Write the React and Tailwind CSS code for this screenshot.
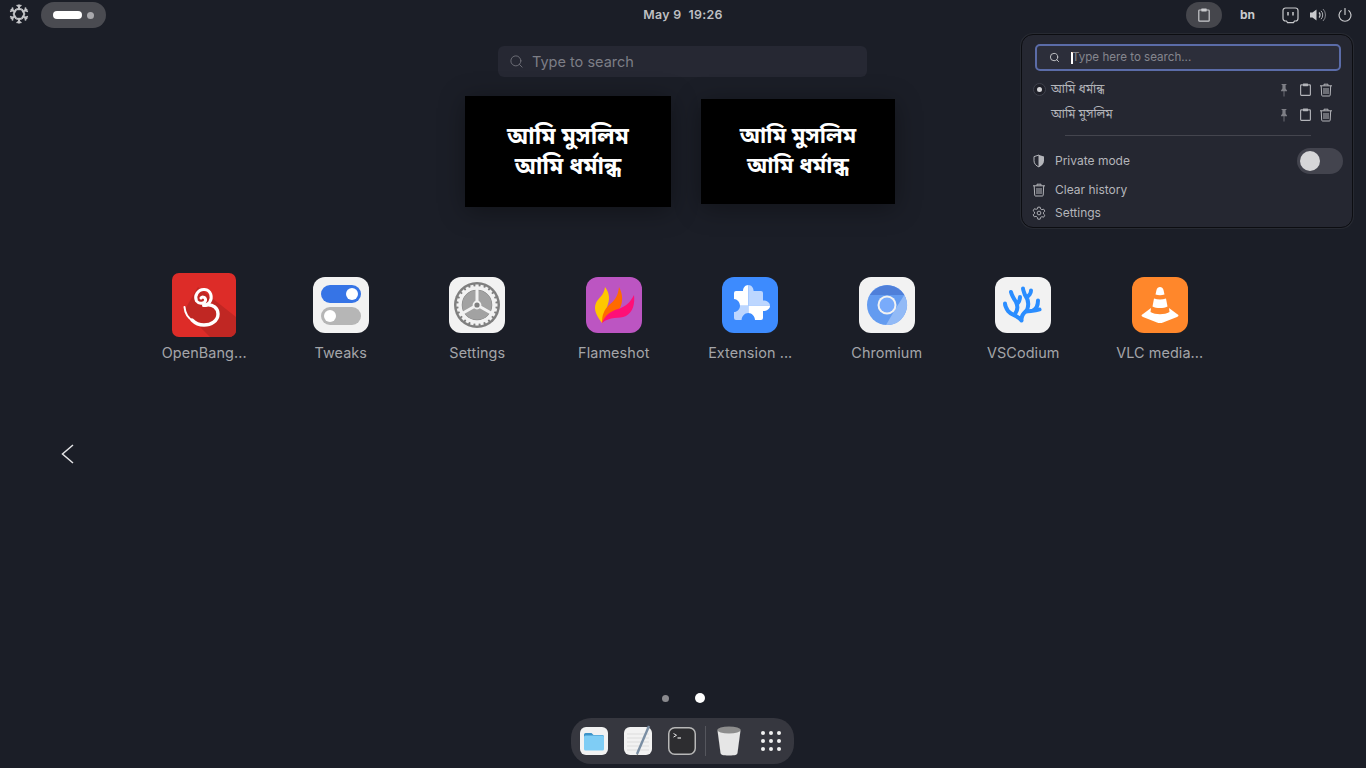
import { Search } from "lucide-react";

const BN = '"Noto Sans Bengali", "Lohit Bengali", "Noto Sans", "DejaVu Sans", sans-serif';

function NixGear() {
  const spokes = [0, 60, 120, 180, 240, 300];
  return (
    <svg width="22" height="22" viewBox="0 0 22 22" fill="none" stroke="#c4c5c8" strokeWidth="2" strokeLinecap="butt">
      {spokes.map((a) => (
        <g key={a} transform={`rotate(${a} 11 11)`}>
          <path d="M8.300 6.200 L13.700 6.200" />
          <path d="M11 6 L11 1.500" />
          <path d="M11 4 L8.600 2 M11 4 L13.400 2" strokeWidth="1.500" />
        </g>
      ))}
    </svg>
  );
}

function ClipIcon({ size = 16, color = "#c9cacd" }) {
  return (
    <svg width={size} height={size} viewBox="0 0 16 16" fill="none" stroke={color} strokeWidth="1.2">
      <path d="M5.2 3H3.6a.8.8 0 0 0-.8.8v9.6a.8.8 0 0 0 .8.8h8.8a.8.8 0 0 0 .8-.8V3.800a.8.8 0 0 0-.8-.8h-1.600" />
      <rect x="5.2" y="1.6" width="5.6" height="2.8" rx="0.6" fill={color} stroke="none" />
    </svg>
  );
}

function PinIcon() {
  return (
    <svg width="12" height="14" viewBox="0 0 12 14" fill="#7d7e85">
      <path d="M3.600 1h4.800v1H7.600v3.400l1.400 2v.8H3v-.8l1.400-2V2H3.600z" />
      <rect x="5.600" y="8" width="0.800" height="5.500" />
    </svg>
  );
}

function TrashIcon({ color = "#b4b5ba" }) {
  return (
    <svg width="14" height="14" viewBox="0 0 14 14" fill="none" stroke={color} strokeWidth="1">
      <path d="M1 2.800h12M5 2.600V1.200h4v1.400" />
      <path d="M2.200 2.800l.5 9.400c0 .5.4.8.8.8h6.900c.5 0 .8-.3.8-.8l.5-9.400" />
      <path d="M5 5v6M7 5v6M9 5v6" />
    </svg>
  );
}

function ShieldIcon() {
  return (
    <svg width="14" height="14" viewBox="0 0 14 14">
      <path d="M7 1L2 2.600v4.200c0 2.900 2.200 5 5 6.200z" fill="none" stroke="#b4b5ba" strokeWidth="1" />
      <path d="M7 1l5 1.600v4.200c0 2.900-2.200 5-5 6.200z" fill="#b4b5ba" />
    </svg>
  );
}

function GearSmall() {
  return (
    <svg width="14" height="14" viewBox="0 0 24 24" fill="none" stroke="#b4b5ba" strokeWidth="1.600" strokeLinejoin="round">
      <path d="M10 2h4l.7 3 2.300 1.300 3-.9 2 3.400-2.300 2.200v2.600l2.300 2.200-2 3.400-3-.9-2.300 1.300-.7 3h-4l-.7-3L7 17.600l-3 .9-2-3.400 2.300-2.200v-2.600L2 8.100l2-3.400 3 .9L9.300 5z" />
      <circle cx="12" cy="12" r="3.200" />
    </svg>
  );
}

function OutletIcon() {
  return (
    <svg width="17" height="17" viewBox="0 0 17 17" fill="none" stroke="#c9cacd" strokeWidth="1.200">
      <path d="M3.500 1h10A2.500 2.500 0 0 1 16 3.500v8a2.500 2.500 0 0 1-2.500 2.500H12.500l-1 1.600h-6l-1-1.600h-1A2.500 2.500 0 0 1 1 11.500v-8A2.500 2.500 0 0 1 3.500 1z" />
      <path d="M6 5v3.500M11 5v3.500" strokeWidth="1.500" />
    </svg>
  );
}

function VolumeIcon() {
  return (
    <svg width="18" height="16" viewBox="0 0 18 16" fill="none" stroke="#c9cacd">
      <path d="M1 5.500h2.500L7.500 2.500v11L3.500 10.500H1z" fill="#c9cacd" stroke="none" />
      <path d="M10 5.500a3.500 3.500 0 0 1 0 5" strokeWidth="1.200" />
      <path d="M12 3.800a6 6 0 0 1 0 8.400" strokeWidth="1" opacity="0.85" />
      <path d="M14 2a8.500 8.500 0 0 1 0 12" strokeWidth="1" opacity="0.6" />
    </svg>
  );
}

function PowerIcon() {
  return (
    <svg width="16" height="16" viewBox="0 0 16 16" fill="none" stroke="#c9cacd" strokeWidth="1.200" strokeLinecap="round">
      <path d="M8 1.500v6" />
      <path d="M4.200 3.600a6 6 0 1 0 7.600 0" />
    </svg>
  );
}

function OpenBanglaIcon() {
  return (
    <svg width="64" height="64" viewBox="0 0 64 64" fill="none">
      <rect width="64" height="64" rx="7" fill="#dd2c28" />
      <path d="M26 14 L64 44 V57 a7 7 0 0 1-7 7 H38 L12 38z" fill="#c02723" />
      <path d="M29 25c1.500-2 5-.5 4.500 2.500-.5 3-6.500 4-9 .5-2.500-5 1.500-12 8-11.500 6.500.5 8.500 8 5 13-1.500 2-3.500 3-6 3" stroke="#fff" strokeWidth="3" strokeLinecap="round" />
      <path d="M34 32c7-1 12 3 12 9 0 7-7 11-14 11-5 0-9-2-12-5" stroke="#fff" strokeWidth="3.400" strokeLinecap="round" />
      <path d="M21 48c-5-3-8-8-8.500-14" stroke="#fff" strokeWidth="2" strokeLinecap="round" />
    </svg>
  );
}

function TweaksIcon() {
  return (
    <svg width="56" height="56" viewBox="0 0 56 56">
      <rect width="56" height="56" rx="12" fill="#f2f2f2" />
      <rect x="8" y="8" width="40" height="18" rx="9" fill="#3674e6" />
      <circle cx="39" cy="17" r="6" fill="#fff" />
      <rect x="8" y="30" width="40" height="18" rx="9" fill="#b6b6b6" />
      <circle cx="17" cy="39" r="6" fill="#fff" />
    </svg>
  );
}

function SettingsIcon() {
  const teeth = Array.from({ length: 24 }, (_, i) => i * 15);
  return (
    <svg width="56" height="56" viewBox="0 0 56 56">
      <rect width="56" height="56" rx="12" fill="#f2f2f2" />
      <circle cx="28" cy="28" r="23" fill="#7f7f7f" />
      {teeth.map((a) => (
        <rect key={a} x="26.400" y="7.500" width="3.200" height="4.500" fill="#f2f2f2" transform={`rotate(${a} 28 28)`} />
      ))}
      <circle cx="28" cy="28" r="17" fill="none" stroke="#f2f2f2" strokeWidth="3.500" />
      <circle cx="28" cy="28" r="14.800" fill="#a2a2a2" />
      <path d="M28 28V12M28 28L14 36M28 28l14 8" stroke="#f2f2f2" strokeWidth="3" />
      <circle cx="28" cy="28" r="3.500" fill="#7f7f7f" stroke="#f2f2f2" strokeWidth="1.800" />
    </svg>
  );
}

function FlameshotIcon() {
  return (
    <svg width="56" height="56" viewBox="0 0 56 56">
      <rect width="56" height="56" rx="12" fill="#bc55c2" />
      <path d="M16 46c-5-7-9-13-6-20 2-5 8-7 9-16 4 5 5 11 3 17-2 6-4 11-6 19z" fill="#fec700" />
      <path d="M16 46c0-8 2-13 7-18 5-4 9-8 10-18 4 7 4 15 1 21-5 6-12 7-18 15z" fill="#ff6a00" />
      <path d="M16 46c3-8 9-12 16-14 7-2 12-6 16-14 1 9-1 17-8 21-7 3-16 0-24 7z" fill="#ff0f77" />
    </svg>
  );
}

function ExtensionIcon() {
  return (
    <svg width="56" height="56" viewBox="0 0 56 56">
      <rect width="56" height="56" rx="12" fill="#3d8bfe" />
      <path d="M12 22V16a2 2 0 0 1 2-2h7c0-3 2-6 5.300-6V28.700H18c0-3.600-3-6.700-6-6.700z" fill="#fff" />
      <path d="M26.300 8c3.300 0 5.300 3 5.300 6H39a2 2 0 0 1 2 2v7.500c4 0 7 2 7 5.200H26.300z" fill="#bcd6ff" />
      <path d="M26.300 28.700H48c0 3.200-3 5.300-7 5.300v7a2 2 0 0 1-2 2h-6c0-3.500-3-7-6.700-7z" fill="#fff" />
      <path d="M12 35c3 0 6-3 6-6.300H26.300V36c-3.700 0-6.700 3.500-6.700 7H14a2 2 0 0 1-2-2z" fill="#bcd6ff" />
    </svg>
  );
}

function ChromiumIcon() {
  return (
    <svg width="56" height="56" viewBox="0 0 56 56">
      <rect width="56" height="56" rx="12" fill="#f2f2f2" />
      <circle cx="28" cy="28" r="20" fill="#639bf0" />
      <path d="M11 18a20 20 0 0 1 34.300 0H28z" fill="#4f7fd9" />
      <path d="M45.300 18A20 20 0 0 1 27 48l10-17z" fill="#92baf6" />
      <circle cx="28" cy="28" r="9.500" fill="#f2f2f2" />
      <circle cx="28" cy="28" r="7.500" fill="#79abfb" />
    </svg>
  );
}

function CodiumIcon() {
  return (
    <svg width="56" height="56" viewBox="0 0 56 56" fill="none">
      <rect width="56" height="56" rx="12" fill="#f2f2f2" />
      <path
        d="M26.500 43.500C26 38 29 36 32 33M30 35C34 33 38 35 44.500 32.500M38 33.500C41 32 43 28 43 23.500M32 33C34 28 33 22 30 18 29 15 28 13 28 11.500M31.500 20C34 19 36 16 36 13.500M26.500 43.500C22 38 16 38 13 34 11 31 10 29 10 26.500M20 37C23 33 23 29 21 25 19 22 17 19 16 15M22 27C24 25 25 23 25 20"
        stroke="#2a8dff"
        strokeWidth="4"
        strokeLinecap="round"
        strokeLinejoin="round"
      />
    </svg>
  );
}

function VlcIcon() {
  return (
    <svg width="56" height="56" viewBox="0 0 56 56">
      <rect width="56" height="56" rx="12" fill="#ff872b" />
      <path d="M11 37l8-6-.5 4c5 3 14 3 19 0l-.5-4 8 6c2 1.200 2 2 0 3l-14 5.500c-1.500.7-4.500.7-6 0L11 40c-2-1-2-1.800 0-3z" fill="#fff" />
      <path d="M24.500 13c.8-4 6.200-4 7 0l1 4.500c-3 1-6 1-9 0z" fill="#fff" />
      <path d="M22 21.500c4 1.300 8 1.300 12 0l1.500 8c-4 2-11 2-15 0z" fill="#fff" />
    </svg>
  );
}

function FilesIcon() {
  return (
    <svg width="28" height="28" viewBox="0 0 28 28">
      <rect width="28" height="28" rx="6" fill="#f2f2f2" />
      <path d="M4 7.500A1.500 1.500 0 0 1 5.500 6h6l2 2h9A1.500 1.500 0 0 1 24 9.500V12H4z" fill="#3d93c8" />
      <rect x="4" y="8.500" width="20" height="15" rx="1.500" fill="#7fcdf5" />
    </svg>
  );
}

function EditorIcon() {
  return (
    <svg width="28" height="32" viewBox="0 0 28 32">
      <rect y="2" width="28" height="28" rx="6" fill="#f2f2f2" />
      <path d="M3 9h22M3 13h22M3 17h22M3 21h22M3 25h22" stroke="#dcdcdc" strokeWidth="1" />
      <path d="M25 1L13 29" stroke="#7a8ea3" strokeWidth="2.400" />
      <path d="M13 29l-1 3 2-2z" fill="#444" />
    </svg>
  );
}

function TerminalIcon() {
  return (
    <svg width="28" height="28" viewBox="0 0 28 28" fill="none">
      <rect x="0.750" y="0.750" width="26.500" height="26.500" rx="6" fill="#2d2d30" stroke="#b8b8b8" strokeWidth="1.500" />
      <path d="M5.500 6.500l3 1.800-3 1.800" stroke="#e6e6e6" strokeWidth="1" />
      <path d="M9.500 11h3.500" stroke="#e6e6e6" strokeWidth="1.200" />
    </svg>
  );
}

function TrashCanIcon() {
  return (
    <svg width="24" height="30" viewBox="0 0 24 30">
      <path d="M.5 4.500h23L20.500 27c-.3 1.800-2 2.500-8.500 2.500S3.800 28.800 3.500 27z" fill="#e6e6e6" />
      <ellipse cx="12" cy="4" rx="11.800" ry="3.500" fill="#8d8d8d" />
    </svg>
  );
}

function AppGridIcon() {
  const dots = Array.from({ length: 9 }, (_, i) => i);
  return (
    <div className="grid grid-cols-3">
      {dots.map((d) => (
        <span key={d} className="w-[4px] h-[4px] m-[2px] rounded-full bg-[#f2f2f2]" />
      ))}
    </div>
  );
}

const APPS = [
  { name: "OpenBang...", icon: <OpenBanglaIcon /> },
  { name: "Tweaks", icon: <TweaksIcon /> },
  { name: "Settings", icon: <SettingsIcon /> },
  { name: "Flameshot", icon: <FlameshotIcon /> },
  { name: "Extension ...", icon: <ExtensionIcon /> },
  { name: "Chromium", icon: <ChromiumIcon /> },
  { name: "VSCodium", icon: <CodiumIcon /> },
  { name: "VLC media...", icon: <VlcIcon /> },
];

function TopBar() {
  return (
    <div className="h-[28px] grid grid-cols-[1fr_auto_1fr] items-center shrink-0">
      <div className="flex items-center">
        <span className="ml-[8px] w-[22px] flex justify-center"><NixGear /></span>
        <div className="ml-[11px] mt-[2px] w-[65px] h-[26px] rounded-full bg-[#4a4b51] flex items-center pl-[12px]">
          <span className="w-[29px] h-[8px] rounded-full bg-white" />
          <span className="ml-[5px] w-[7px] h-[7px] rounded-full bg-[#a9a9ad]" />
        </div>
      </div>
      <span className="text-[12.400px] font-semibold text-[#bfc0c3] tracking-[0.3px] whitespace-pre mt-[2px]">May 9  19:26</span>
      <div className="flex items-center justify-end mt-[2px] pr-[13px]">
        <span className="w-[36px] h-[26px] rounded-full bg-[#45464c] flex items-center justify-center"><ClipIcon /></span>
        <span className="ml-[18px] w-[15px] text-[12px] font-bold text-[#c9cacd]">bn</span>
        <span className="ml-[27px]"><OutletIcon /></span>
        <span className="ml-[10px]"><VolumeIcon /></span>
        <span className="ml-[10px]"><PowerIcon /></span>
      </div>
    </div>
  );
}

function HistoryRow({ text, active }) {
  return (
    <div className="h-[25px] flex items-center pl-[11px] pr-[19px]">
      <span className="w-[18px] flex justify-start">
        {active && (
          <span className="w-[13px] h-[13px] rounded-full border border-[#3f414c] bg-[#1f2029] flex items-center justify-center">
            <span className="w-[5px] h-[5px] rounded-full bg-[#d5d5d8]" />
          </span>
        )}
      </span>
      <span className="text-[12px] text-[#b4b5ba] mt-[1px]" style={{ fontFamily: BN }}>{text}</span>
      <span className="ml-auto flex items-center">
        <PinIcon />
        <span className="ml-[8px]"><ClipIcon size={15} color="#b4b5ba" /></span>
        <span className="ml-[6px]"><TrashIcon /></span>
      </span>
    </div>
  );
}

function ClipboardMenu() {
  return (
    <div className="absolute left-[1021px] top-[34px] w-[332px] h-[194px] rounded-[12px] bg-[#252731] border border-[#0c0d11] ring-1 ring-[#3a3b44]/40 pt-[9px] z-10">
      <div className="ml-[13px] mr-[11px] h-[27px] rounded-[5px] border-2 border-[#5b6ca8] bg-[#2c2e3a] flex items-center pl-[12px]">
        <Search size={11} color="#c9cacd" strokeWidth={2} />
        <span className="ml-[11px] w-[2px] h-[12px] bg-white -mr-[1px]" />
        <span className="text-[11.600px] text-[#85868e] mt-[1px]">Type here to search...</span>
      </div>
      <div className="mt-[6px]">
        <HistoryRow text="আমি ধর্মান্ধ" active />
        <HistoryRow text="আমি মুসলিম" />
      </div>
      <div className="mt-[8px] ml-[43px] mr-[41px] h-px bg-[#44454e]" />
      <div className="mt-[12px] h-[26px] flex items-center pl-[10px] pr-[9px]">
        <span className="w-[23px]"><ShieldIcon /></span>
        <span className="text-[12px] text-[#b4b5ba]">Private mode</span>
        <span className="ml-auto w-[46px] h-[26px] rounded-full bg-[#43444e] flex items-center pl-[3px]">
          <span className="w-[20px] h-[20px] rounded-full bg-[#d6d6d8]" />
        </span>
      </div>
      <div className="mt-[4px] h-[23px] flex items-center pl-[10px]">
        <span className="w-[23px]"><TrashIcon /></span>
        <span className="text-[12px] text-[#b4b5ba]">Clear history</span>
      </div>
      <div className="h-[23px] flex items-center pl-[10px]">
        <span className="w-[23px]"><GearSmall /></span>
        <span className="text-[12px] text-[#b4b5ba]">Settings</span>
      </div>
    </div>
  );
}

function Preview({ className, size, gap }) {
  return (
    <div className={`bg-black shadow-[0_4px_24px_rgba(0,0,0,0.35)] flex flex-col items-center justify-center pt-[3px] text-white font-bold ${className}`} style={{ fontFamily: BN, fontSize: size, lineHeight: `${gap}px` }}>
      <span>আমি মুসলিম</span>
      <span>আমি ধর্মান্ধ</span>
    </div>
  );
}

export default function App() {
  return (
    <div className="relative w-[1366px] h-[768px] overflow-hidden bg-[#1b1e27] flex flex-col font-['Inter',sans-serif]">
      <TopBar />
      <ClipboardMenu />

      <div className="mt-[18px] ml-[498px] w-[369px] h-[31px] rounded-[6px] bg-[#262833] flex items-center pl-[11px] shrink-0">
        <Search size={15} color="#6f7079" strokeWidth={1.500} />
        <span className="ml-[8px] mt-[1px] text-[14.500px] text-[#7d7e86]">Type to search</span>
      </div>

      <div className="mt-[19px] h-[111px] flex items-center justify-center gap-[30px] pr-[6px] shrink-0">
        <Preview className="w-[206px] h-[111px]" size={23} gap={30} />
        <Preview className="w-[194px] h-[105px]" size={22} gap={30} />
      </div>

      <div className="mt-[66px] ml-[136px] w-[1092px] grid grid-cols-8 shrink-0">
        {APPS.map((app) => (
          <div key={app.name} className="flex flex-col items-center">
            <div className="h-[64px] flex items-center justify-center">{app.icon}</div>
            <span className="mt-[6px] text-[14.400px] leading-[20px] tracking-[0.1px] text-[#a4a5a9] whitespace-nowrap">{app.name}</span>
          </div>
        ))}
      </div>

      <div className="mt-[81px] pl-[60px] h-[20px] shrink-0">
        <svg width="14" height="20" viewBox="0 0 14 20" fill="none" stroke="#e4e4e6" strokeWidth="1.500">
          <path d="M13 1L2.500 10l10.500 9" />
        </svg>
      </div>

      <div className="mt-auto h-[10px] flex items-center justify-center gap-[26px] shrink-0">
        <span className="w-[7px] h-[7px] rounded-full bg-[#8a8a8e]" />
        <span className="w-[10px] h-[10px] rounded-full bg-white" />
      </div>

      <div className="mt-[15px] mb-[4px] ml-[571px] h-[46px] w-[223px] rounded-[20px] bg-[#36373f] flex items-center pl-[9px] shrink-0">
        <FilesIcon />
        <span className="ml-[16px] flex"><EditorIcon /></span>
        <span className="ml-[16px] flex"><TerminalIcon /></span>
        <span className="ml-[9px] w-px h-[30px] bg-[#55565d]" />
        <span className="ml-[11px] flex"><TrashCanIcon /></span>
        <span className="ml-[18px] flex"><AppGridIcon /></span>
      </div>
    </div>
  );
}
